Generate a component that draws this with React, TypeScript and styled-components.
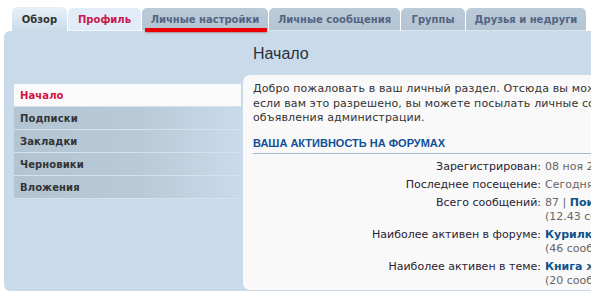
import styled, { createGlobalStyle, css } from "styled-components";

const GlobalStyle = createGlobalStyle`
  html, body {
    margin: 0;
    padding: 0;
    background: #ffffff;
    overflow: hidden;
  }
`;

type TabKind = "active" | "profile" | "normal";

const tabs: { label: string; width: number; kind: TabKind }[] = [
  { label: "Обзор", width: 55, kind: "active" },
  { label: "Профиль", width: 73, kind: "profile" },
  { label: "Личные настройки", width: 126, kind: "normal" },
  { label: "Личные сообщения", width: 131, kind: "normal" },
  { label: "Группы", width: 64, kind: "normal" },
  { label: "Друзья и недруги", width: 120, kind: "normal" },
];

const menu = ["Начало", "Подписки", "Закладки", "Черновики", "Вложения"];

const Page = styled.div`
  position: relative;
  width: 591px;
  height: 293px;
  overflow: hidden;
  padding-top: 7px;
  box-sizing: border-box;
  font-family: "DejaVu Sans", Verdana, sans-serif;
`;

const TabBar = styled.div`
  display: flex;
  align-items: flex-end;
  gap: 1px;
  height: 24px;
  padding-left: 12px;
`;

const Tab = styled.div<{ $w: number; $kind: TabKind }>`
  width: ${(p) => p.$w}px;
  height: 24px;
  box-sizing: border-box;
  display: flex;
  align-items: center;
  justify-content: center;
  border-radius: 5px 5px 0 0;
  font-size: 10px;
  font-weight: bold;
  white-space: nowrap;
  ${(p) =>
    p.$kind === "active"
      ? css`
          background: linear-gradient(#e9f0f7, #cadcea);
          color: #333333;
        `
      : p.$kind === "profile"
      ? css`
          height: 23px;
          background: #e1ecf8;
          color: #c8174c;
          border-bottom: 1px solid #f3f7fb;
        `
      : css`
          height: 23px;
          background: linear-gradient(#bccbda, #b3c4d3);
          color: #536482;
          border-bottom: 1px solid #dbe5ee;
        `}
`;

const Marker = styled.div`
  position: absolute;
  left: 145px;
  top: 28px;
  width: 122px;
  height: 4px;
  background: #ee0000;
  border-radius: 1px;
  box-shadow: 0 1px 2px rgba(120, 0, 0, 0.35);
`;

const Panel = styled.div`
  display: flex;
  margin-left: 4px;
  height: 260px;
  padding: 0 0 1px 10px;
  box-sizing: border-box;
  background: #c9dbea;
  border-radius: 6px 0 0 6px;
`;

const SideMenu = styled.ul`
  width: 229px;
  flex: none;
  margin: 0;
  padding: 53px 0 0;
  list-style: none;
`;

const MenuItem = styled.li<{ $active?: boolean }>`
  height: 22px;
  margin-right: 2px;
  border-bottom: 1px solid #d5e2ed;
  display: flex;
  align-items: center;
  padding-left: 6px;
  font-size: 10px;
  font-weight: bold;
  letter-spacing: 0.1px;
  color: ${(p) => (p.$active ? "#d31141" : "#333333")};
  background: ${(p) =>
    p.$active
      ? "#fafafa"
      : "linear-gradient(90deg, #b3c4d3 0%, #b8c9d8 55%, #c9dbea 100%)"};
`;

const Main = styled.div`
  display: flex;
  flex-direction: column;
  flex: none;
  width: 620px;
`;

const Title = styled.h2`
  margin: 0;
  height: 44px;
  padding-left: 10px;
  display: flex;
  align-items: center;
  padding-top: 1px;
  box-sizing: border-box;
  font-family: "Liberation Sans", Arial, sans-serif;
  font-size: 16px;
  font-weight: normal;
  color: #28313f;
`;

const Content = styled.div`
  flex: 1;
  background: #f9f9f9;
  border-radius: 7px 0 0 7px;
  padding: 7px 10px 0;
  font-size: 11px;
  line-height: 14.6px;
  color: #333333;
`;

const Intro = styled.p`
  margin: 0;
  white-space: nowrap;
  letter-spacing: 0.14px;
`;

const Heading = styled.h3`
  margin: 10px 0 0;
  padding-bottom: 3px;
  border-bottom: 1px solid #a9b8c6;
  font-family: "Liberation Sans", Arial, sans-serif;
  font-size: 11px;
  line-height: 14px;
  font-weight: bold;
  text-transform: uppercase;
  color: #115098;
`;

const Stats = styled.dl`
  display: grid;
  grid-template-columns: 288px auto;
  column-gap: 4px;
  row-gap: 4px;
  margin: 6px 0 0;
  line-height: 14px;
`;

const Label = styled.dt`
  text-align: right;
  white-space: nowrap;
  color: #2a2233;
`;

const Value = styled.dd`
  margin: 0;
  white-space: nowrap;
  color: #666666;
`;

const Strong = styled.a`
  color: #105289;
  font-weight: bold;
  text-decoration: none;
`;

export default function App() {
  return (
    <>
      <GlobalStyle />
      <Page>
        <TabBar>
          {tabs.map((t) => (
            <Tab key={t.label} $w={t.width} $kind={t.kind}>
              {t.label}
            </Tab>
          ))}
        </TabBar>
        <Marker />
        <Panel>
          <SideMenu>
            {menu.map((m, i) => (
              <MenuItem key={m} $active={i === 0}>
                {m}
              </MenuItem>
            ))}
          </SideMenu>
          <Main>
            <Title>Начало</Title>
            <Content>
              <Intro>
                Добро пожаловать в ваш личный раздел. Отсюда вы можете просматривать и изменять свой профиль
                <br />
                если вам это разрешено, вы можете посылать личные сообщения другим пользователям.
                <br />
                объявления администрации.
              </Intro>
              <Heading>Ваша активность на форумах</Heading>
              <Stats>
                <Label>Зарегистрирован:</Label>
                <Value>08 ноя 2009, 14:21</Value>
                <Label>Последнее посещение:</Label>
                <Value>Сегодня, 10:15</Value>
                <Label>Всего сообщений:</Label>
                <Value>
                  87 | <Strong>Поиск сообщений</Strong>
                  <br />
                  (12.43 сообщений в день)
                </Value>
                <Label>Наиболее активен в форуме:</Label>
                <Value>
                  <Strong>Курилка</Strong>
                  <br />
                  (46 сообщений)
                </Value>
                <Label>Наиболее активен в теме:</Label>
                <Value>
                  <Strong>Книга жалоб</Strong>
                  <br />
                  (20 сообщений)
                </Value>
              </Stats>
            </Content>
          </Main>
        </Panel>
      </Page>
    </>
  );
}
